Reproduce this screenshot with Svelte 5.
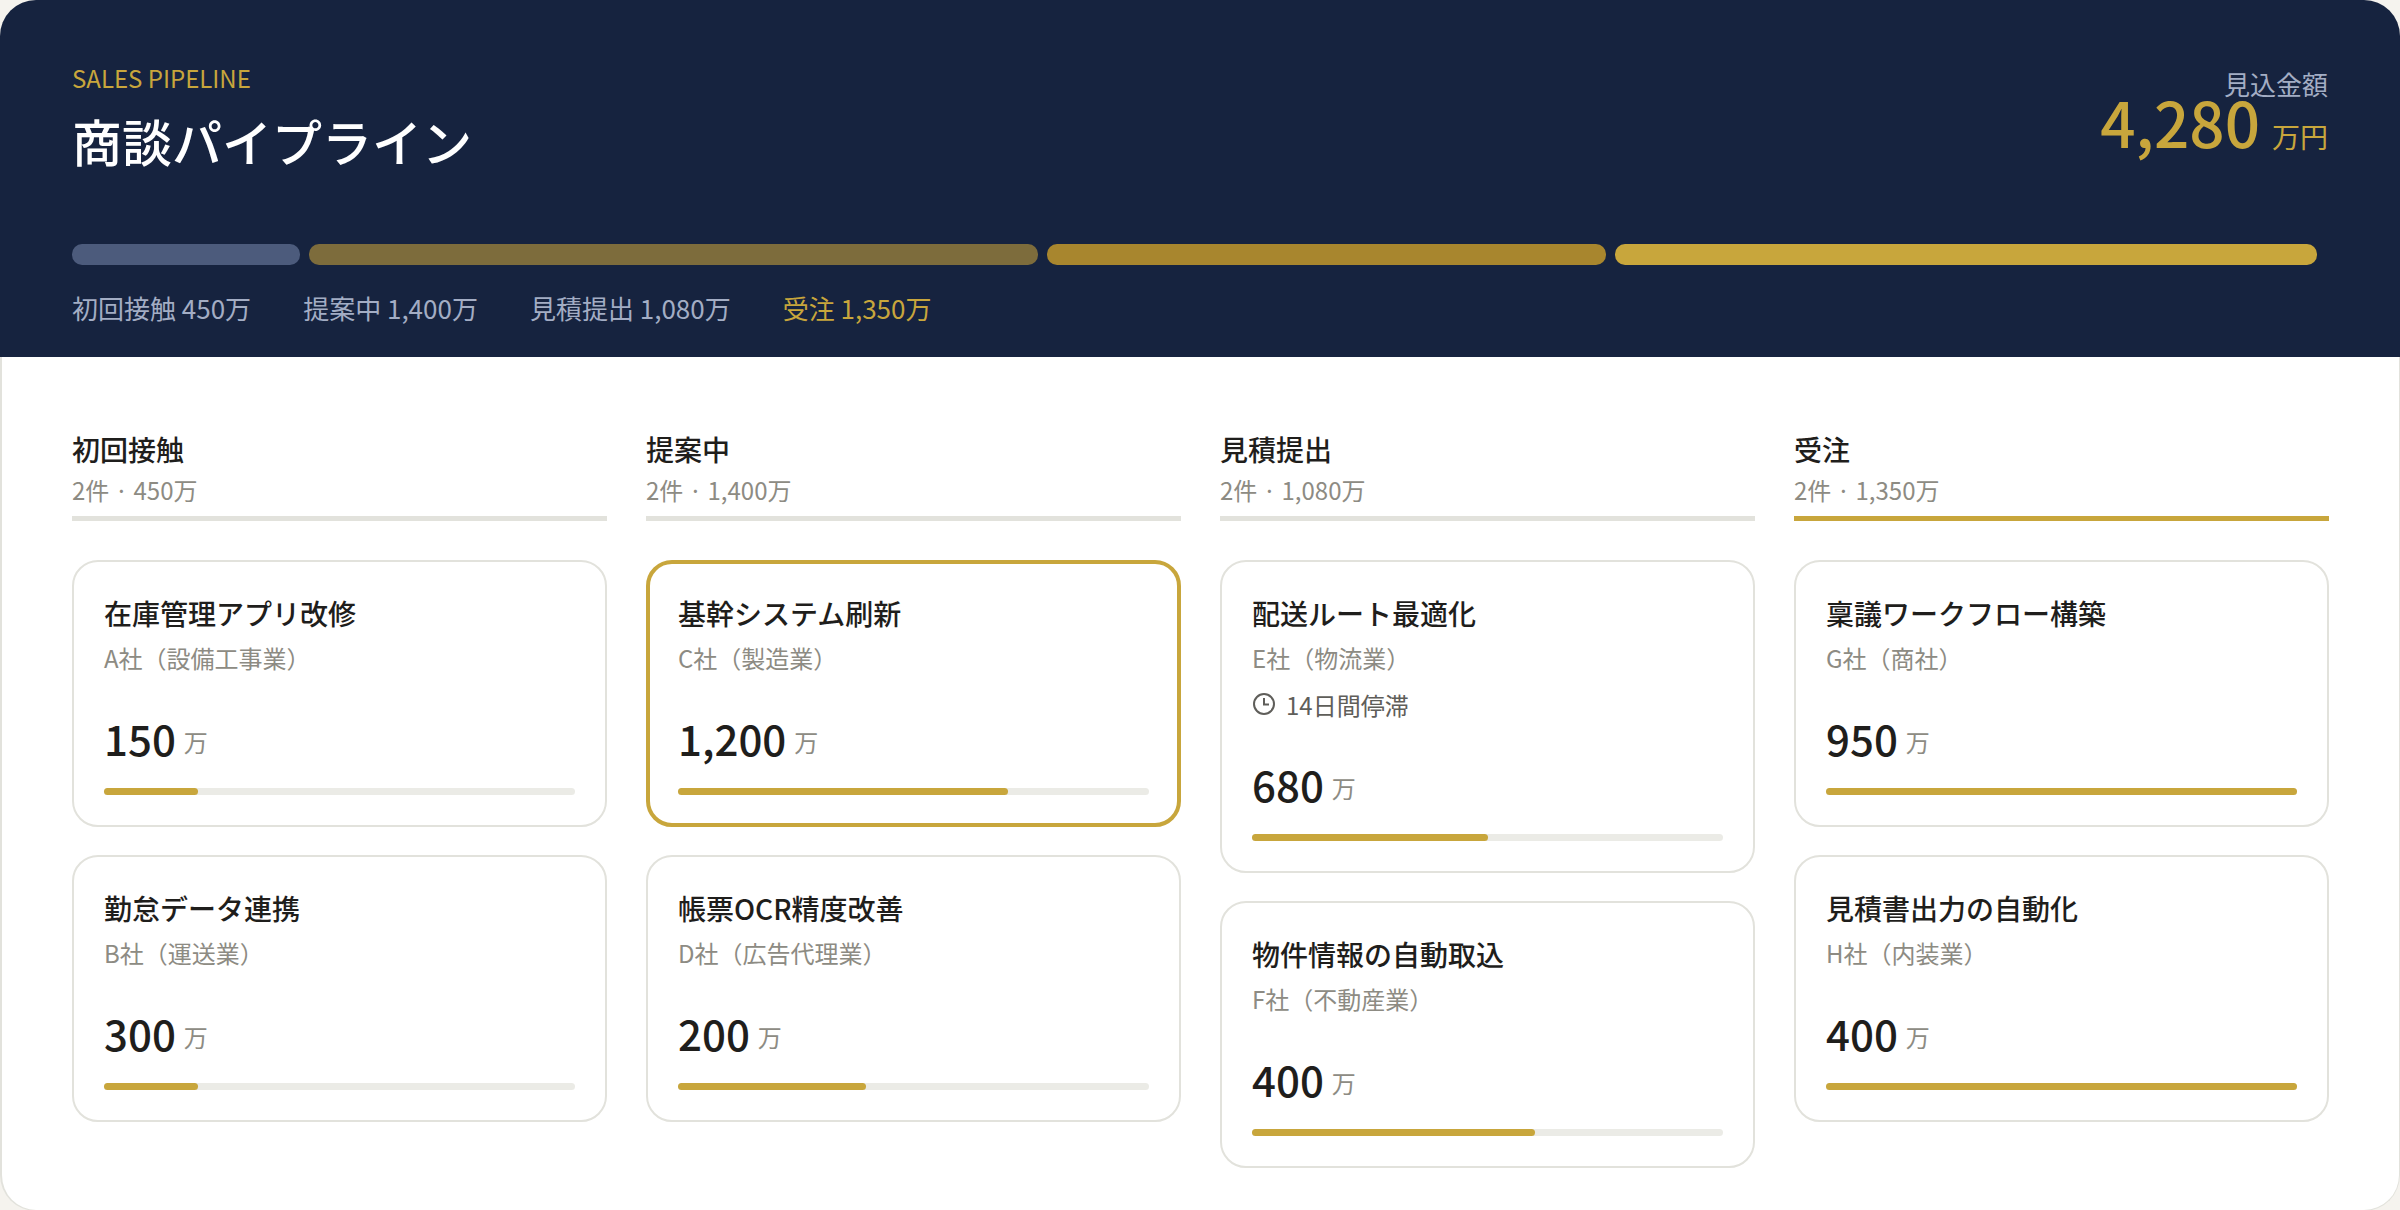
<script>
  const total = "4,280";

  // share = width of the segment in the summary bar
  const stages = [
    {
      name: "初回接触",
      amount: "450万",
      tone: "first",
      share: 228,
      deals: [
        { title: "在庫管理アプリ改修", client: "A社（設備工事業）", amount: "150", progress: 20 },
        { title: "勤怠データ連携", client: "B社（運送業）", amount: "300", progress: 20 },
      ],
    },
    {
      name: "提案中",
      amount: "1,400万",
      tone: "proposal",
      share: 729,
      deals: [
        { title: "基幹システム刷新", client: "C社（製造業）", amount: "1,200", progress: 70, featured: true },
        { title: "帳票OCR精度改善", client: "D社（広告代理業）", amount: "200", progress: 40 },
      ],
    },
    {
      name: "見積提出",
      amount: "1,080万",
      tone: "quote",
      share: 559,
      deals: [
        { title: "配送ルート最適化", client: "E社（物流業）", amount: "680", progress: 50, stalled: "14日間停滞" },
        { title: "物件情報の自動取込", client: "F社（不動産業）", amount: "400", progress: 60 },
      ],
    },
    {
      name: "受注",
      amount: "1,350万",
      tone: "won",
      share: 702,
      deals: [
        { title: "稟議ワークフロー構築", client: "G社（商社）", amount: "950", progress: 100 },
        { title: "見積書出力の自動化", client: "H社（内装業）", amount: "400", progress: 100 },
      ],
    },
  ];
</script>

<main class="panel">
  <header class="summary">
    <div class="summary-top">
      <div>
        <p class="eyebrow">SALES PIPELINE</p>
        <h1>商談パイプライン</h1>
      </div>
      <div class="forecast">
        <p class="forecast-label">見込金額</p>
        <p class="forecast-value">{total}<span>万円</span></p>
      </div>
    </div>

    <div class="segments">
      {#each stages as stage}
        <div class="segment {stage.tone}" style="flex-grow: {stage.share}"></div>
      {/each}
    </div>

    <ul class="legend">
      {#each stages as stage}
        <li class:won-text={stage.tone === "won"}>{stage.name} {stage.amount}</li>
      {/each}
    </ul>
  </header>

  <div class="board">
    {#each stages as stage}
      <section class="column">
        <div class="column-head" class:won-head={stage.tone === "won"}>
          <h2>{stage.name}</h2>
          <p>{stage.deals.length}件 · {stage.amount}</p>
        </div>

        {#each stage.deals as deal}
          <article class="card" class:featured={deal.featured}>
            <h3>{deal.title}</h3>
            <p class="client">{deal.client}</p>
            {#if deal.stalled}
              <p class="stalled">
                <svg viewBox="0 0 24 24" aria-hidden="true">
                  <circle cx="12" cy="11" r="10" />
                  <path d="M12 5v6.5h5" />
                </svg>
                {deal.stalled}
              </p>
            {/if}
            <p class="amount">{deal.amount}<span>万</span></p>
            <div class="track">
              <div class="fill" style="width: {deal.progress}%"></div>
            </div>
          </article>
        {/each}
      </section>
    {/each}
  </div>
</main>

<style>
  :global(body) {
    background: #f5f3ee;
  }

  h1,
  h2,
  h3,
  p,
  ul {
    margin: 0;
    padding: 0;
    font-weight: 400;
  }

  .panel {
    display: flex;
    flex-direction: column;
    box-sizing: border-box;
    min-height: 100vh;
    font-family: "Noto Sans CJK JP", "Noto Sans", sans-serif;
    color: #1f1e1c;
  }

  .summary {
    padding: 60px 72px 30px;
    border-radius: 36px 36px 0 0;
    background: #16233f;
  }

  .summary-top {
    display: flex;
    justify-content: space-between;
    height: 184px;
  }

  .eyebrow {
    font-size: 24px;
    line-height: 36px;
    color: #c8a63c;
  }

  h1 {
    margin-top: 14px;
    font-size: 50px;
    font-weight: 500;
    line-height: 60px;
    color: #fff;
  }

  .forecast {
    padding-top: 11px;
    text-align: right;
  }

  .forecast-label {
    font-size: 26px;
    line-height: 26px;
    color: #a3adc4;
  }

  .forecast-value {
    font-size: 62px;
    font-weight: 500;
    line-height: 48px;
    color: #c8a63c;
  }

  .forecast-value span {
    margin-left: 12px;
    font-size: 28px;
    font-weight: 400;
    line-height: 28px;
  }

  .segments {
    display: flex;
    gap: 9px;
    padding-right: 11px;
  }

  .segment {
    flex-basis: 0;
    height: 21px;
    border-radius: 10px;
  }

  .first {
    background: #4c5b7c;
  }

  .proposal {
    background: #7d6c3c;
  }

  .quote {
    background: #a8862e;
  }

  .won {
    background: #c8a63c;
  }

  .legend {
    display: flex;
    gap: 52px;
    margin-top: 24px;
    list-style: none;
    font-size: 26px;
    line-height: 38px;
    color: #a3adc4;
  }

  .won-text {
    color: #c8a63c;
  }

  .board {
    display: grid;
    flex: 1;
    grid-template-columns: repeat(4, 1fr);
    align-items: start;
    gap: 39px;
    padding: 72px 70px 42px;
    border: solid #e2e2dc;
    border-width: 0 1px 1px 2px;
    border-radius: 0 0 36px 36px;
    background: #fff;
  }

  .column {
    display: flex;
    flex-direction: column;
    gap: 28px;
  }

  .column-head {
    margin-bottom: 11px;
    padding-bottom: 8px;
    border-bottom: 5px solid #e2e2dc;
  }

  .won-head {
    border-color: #c8a63c;
  }

  h2 {
    font-size: 28px;
    font-weight: 500;
    line-height: 40px;
  }

  .column-head p {
    margin-top: 3px;
    font-size: 24px;
    line-height: 36px;
    color: #8d8b83;
  }

  .card {
    padding: 30px;
    border: 2px solid #e2e2dc;
    border-radius: 26px;
  }

  .featured {
    padding: 28px;
    border: 4px solid #c8a63c;
  }

  h3 {
    font-size: 28px;
    font-weight: 500;
    line-height: 42px;
  }

  .client {
    margin-top: 6px;
    font-size: 24px;
    line-height: 36px;
    color: #8d8b83;
  }

  .stalled {
    display: flex;
    align-items: center;
    gap: 10px;
    margin-top: 12px;
    font-size: 24px;
    line-height: 34px;
    color: #5f5e5a;
  }

  .stalled svg {
    width: 24px;
    height: 24px;
    fill: none;
    stroke: currentColor;
    stroke-width: 2;
  }

  .amount {
    display: flex;
    align-items: flex-end;
    gap: 8px;
    margin-top: 40px;
    font-size: 42px;
    font-weight: 500;
    line-height: 44px;
  }

  .amount span {
    font-size: 24px;
    font-weight: 400;
    line-height: 36px;
    color: #8d8b83;
  }

  .track {
    height: 7px;
    margin-top: 28px;
    border-radius: 4px;
    background: #ebebe6;
  }

  .fill {
    height: 100%;
    border-radius: 4px;
    background: #c8a63c;
  }
</style>
